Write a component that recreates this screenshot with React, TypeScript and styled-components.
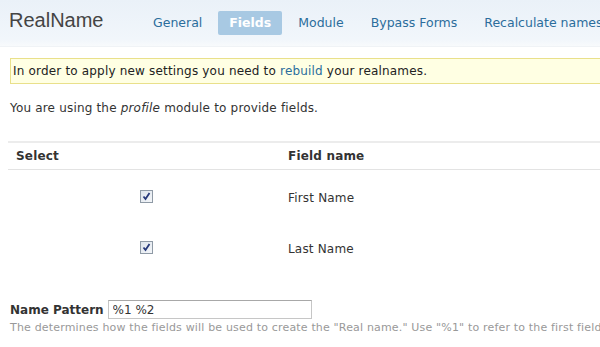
import styled, { createGlobalStyle } from 'styled-components'

const GlobalStyle = createGlobalStyle`
  html, body {
    margin: 0;
    padding: 0;
    background: #ffffff;
    overflow: hidden;
  }
  body {
    font-family: 'DejaVu Sans', Verdana, sans-serif;
    font-size: 12px;
    letter-spacing: 0.18px;
    color: #333333;
  }
`

const Page = styled.div`
  width: 600px;
  height: 347px;
  overflow: hidden;
`

const Header = styled.header`
  display: flex;
  align-items: center;
  height: 46px;
  padding: 0 0 0 9px;
  background: linear-gradient(#eaf1f8, #f1f6fb 85%, #f8fafc);
  border-bottom: 1px solid #f0f3f6;
  white-space: nowrap;
`

const Title = styled.h1`
  flex: 0 0 132px;
  margin: 0;
  font-family: 'Liberation Sans', Arial, sans-serif;
  font-weight: normal;
  font-size: 20px;
  letter-spacing: 0;
  color: #444444;
  position: relative;
  top: -3px;
`

const Tabs = styled.nav`
  display: flex;
  flex-shrink: 0;
  gap: 3px;
`

const Tab = styled.a<{ $active?: boolean }>`
  display: block;
  padding: 4px ${p => (p.$active ? '11px' : '12px')} 5px;
  margin: 0 ${p => (p.$active ? '1px' : '0')};
  font-size: 12.5px;
  letter-spacing: 0;
  text-decoration: none;
  color: ${p => (p.$active ? '#ffffff' : '#2b6d9c')};
  background: ${p => (p.$active ? '#a8c9e3' : 'transparent')};
  font-weight: ${p => (p.$active ? 'bold' : 'normal')};
  border-radius: 2px;
`

const Content = styled.main`
  padding: 11px 0 0 10px;
`

const Notice = styled.div`
  background: #ffffe3;
  border: 1px solid #e9e08a;
  border-right: none;
  padding: 5px 2px 5px;
  line-height: 14px;
  font-size: 12px;
  color: #222222;
  white-space: nowrap;
`

const Link = styled.a`
  color: #2b6d9c;
  text-decoration: none;
`

const Intro = styled.p`
  margin: 17px 0 0 0;
  font-size: 12px;
  color: #333333;
  white-space: nowrap;
`

const Table = styled.table`
  margin: 26px 0 0 -2px;
  width: 600px;
  border-collapse: collapse;
`

const HeadCell = styled.th<{ $width?: number }>`
  text-align: left;
  font-weight: bold;
  font-size: 12px;
  color: #333333;
  padding: 6px 8px 6px;
  border-top: 2px solid #ececec;
  border-bottom: 1px solid #e3e3e3;
  width: ${p => (p.$width ? `${p.$width}px` : 'auto')};
`

const Cell = styled.td<{ $center?: boolean }>`
  height: 47px;
  padding: ${p => (p.$center ? '4px 6px 0 10px' : '4px 8px 0')};
  font-size: 12px;
  color: #333333;
  text-align: ${p => (p.$center ? 'center' : 'left')};
`

const CheckBox = styled.span`
  display: inline-block;
  width: 11px;
  height: 11px;
  border: 1px solid #8f9aa6;
  background: linear-gradient(135deg, #dde4ec, #f4f6f9);
  vertical-align: middle;
  position: relative;
  top: -2px;
  svg {
    display: block;
  }
`

const PatternRow = styled.div`
  display: flex;
  align-items: center;
  gap: 4px;
  margin-top: 28px;
`

const Label = styled.label`
  font-weight: bold;
  font-size: 12px;
  letter-spacing: 0;
  color: #333333;
`

const Input = styled.input`
  width: 194px;
  height: 13px;
  padding: 2px 4px;
  border: 1px solid #c6c6c6;
  border-top-color: #a8a8a8;
  font-family: 'DejaVu Sans', Verdana, sans-serif;
  font-size: 12px;
  color: #333333;
  outline: none;
`

const Description = styled.div`
  margin-top: 2px;
  font-size: 11px;
  letter-spacing: 0.17px;
  color: #999999;
  white-space: nowrap;
`

const fields = ['First Name', 'Last Name']

const tabs = ['General', 'Fields', 'Module', 'Bypass Forms', 'Recalculate names']

function Check() {
  return (
    <CheckBox>
      <svg width="11" height="11" viewBox="0 0 11 11">
        <path d="M2.5 5.5 L4.5 8 L8.5 2" fill="none" stroke="#26387a" strokeWidth="1.8" />
      </svg>
    </CheckBox>
  )
}

export default function App() {
  return (
    <Page>
      <GlobalStyle />
      <Header>
        <Title>RealName</Title>
        <Tabs>
          {tabs.map(t => (
            <Tab key={t} href="#" $active={t === 'Fields'}>{t}</Tab>
          ))}
        </Tabs>
      </Header>
      <Content>
        <Notice>
          In order to apply new settings you need to <Link href="#">rebuild</Link> your realnames.
        </Notice>
        <Intro>
          You are using the <em>profile</em> module to provide fields.
        </Intro>
        <Table>
          <thead>
            <tr>
              <HeadCell $width={256}>Select</HeadCell>
              <HeadCell>Field name</HeadCell>
            </tr>
          </thead>
          <tbody>
            {fields.map(f => (
              <tr key={f}>
                <Cell $center><Check /></Cell>
                <Cell>{f}</Cell>
              </tr>
            ))}
          </tbody>
        </Table>
        <PatternRow>
          <Label htmlFor="pattern">Name Pattern</Label>
          <Input id="pattern" defaultValue="%1 %2" />
        </PatternRow>
        <Description>
          The determines how the fields will be used to create the "Real name." Use "%1" to refer to the first field,
        </Description>
      </Content>
    </Page>
  )
}
